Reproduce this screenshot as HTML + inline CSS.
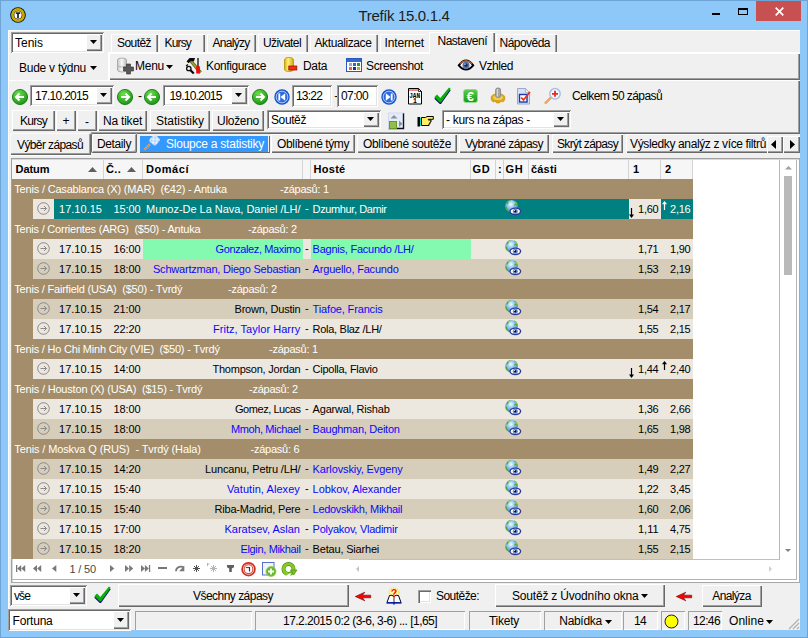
<!DOCTYPE html>
<html lang="cs"><head><meta charset="utf-8"><title>Trefík 15.0.1.4</title>
<style>
html,body{margin:0;padding:0;background:#8ec8f8;}
body{width:808px;height:638px;position:relative;overflow:hidden;font-family:"Liberation Sans", sans-serif;font-size:12px;}
body>div,body>span,body>svg{position:absolute;}
.t{white-space:pre;}
svg{overflow:visible;}
</style></head><body>
<svg width="0" height="0" style="left:0;top:0"><defs><radialGradient id="gl" cx="0.45" cy="0.35" r="0.7"><stop offset="0" stop-color="#f4fbff"/><stop offset="0.45" stop-color="#8cc4f0"/><stop offset="1" stop-color="#2a78d0"/></radialGradient><radialGradient id="gg" cx="0.4" cy="0.3" r="0.8"><stop offset="0" stop-color="#6be04a"/><stop offset="1" stop-color="#128a10"/></radialGradient></defs></svg>
<div id="win" style="left:0;top:0;width:808px;height:638px;background:#8ec8f8;box-shadow:inset 0 0 0 1px #6ea3d6;"></div>
<div style="left:8px;top:30px;width:792px;height:600px;background:#f0f0f0;box-shadow:inset 1px 1px 0 #fff;"></div>
<span class="t" style="left:358.50px;top:7px;font-size:15px;line-height:17px;color:#1c1c1c;letter-spacing:-0.344px;">Trefík 15.0.1.4</span>
<svg style="left:10px;top:7px" width="16" height="16" viewBox="0 0 16 16"><circle cx="8" cy="8" r="7.800" fill="#0a0a00"/><circle cx="8" cy="8" r="5.600" fill="none" stroke="#d0b000" stroke-width="2.600"/><circle cx="8" cy="8" r="5.600" fill="none" stroke="#a88c00" stroke-width="0.600" stroke-dasharray="1.200 1.200"/><circle cx="8" cy="8" r="3.700" fill="#fff"/><path d="M5.800 5.300h4.400v1.700h-1.300v4.300h-1.800v-4.300h-1.300z" fill="#282828"/></svg>
<div style="left:712px;top:13px;width:8px;height:2px;background:#000;"></div>
<div style="left:738px;top:8px;width:10px;height:7px;border:1px solid #000;border-top-width:2px;box-sizing:border-box;"></div>
<div style="left:756px;top:1px;width:45px;height:20px;background:#c75050;"></div>
<svg style="left:775px;top:7px" width="9" height="9" viewBox="0 0 9 9"><path d="M0.700 0.700l7.600 7.600M8.300 0.700l-7.600 7.600" stroke="#fff" stroke-width="1.700" fill="none"/></svg>
<div style="left:11px;top:32px;width:93px;height:21px;background:#fff;box-shadow:inset 1px 1px 0 #a0a0a0, inset -1px -1px 0 #fff, inset 2px 2px 0 #696969, inset -2px -2px 0 #e3e3e3;"></div>
<div style="left:86px;top:34px;width:16px;height:17px;background:#f0f0f0;box-shadow:inset 1px 1px 0 #fff, inset -1px -1px 0 #696969, inset -2px -2px 0 #a0a0a0;"></div>
<svg style="left:90px;top:40px" width="8" height="4" viewBox="0 0 8 4"><path d="M0 0h7l-3.5 4z" fill="#000"/></svg>
<span class="t" style="left:15.00px;top:36px;font-size:12px;line-height:14px;color:#000;">Tenis</span>
<div style="left:111px;top:34px;width:47px;height:18px;background:#f0f0f0;box-shadow:inset 1px 1px 0 #fff, inset -1px 0 0 #696969, inset -2px 0 0 #a0a0a0;"></div>
<span class="t" style="left:117.00px;top:36px;font-size:12px;line-height:14px;color:#000;letter-spacing:-0.560px;">Soutěž</span>
<div style="left:159px;top:34px;width:46px;height:18px;background:#f0f0f0;box-shadow:inset 1px 1px 0 #fff, inset -1px 0 0 #696969, inset -2px 0 0 #a0a0a0;"></div>
<span class="t" style="left:164.50px;top:36px;font-size:12px;line-height:14px;color:#000;letter-spacing:-0.835px;">Kursy</span>
<div style="left:207px;top:34px;width:49px;height:18px;background:#f0f0f0;box-shadow:inset 1px 1px 0 #fff, inset -1px 0 0 #696969, inset -2px 0 0 #a0a0a0;"></div>
<span class="t" style="left:212.50px;top:36px;font-size:12px;line-height:14px;color:#000;letter-spacing:-0.717px;">Analýzy</span>
<div style="left:258px;top:34px;width:50px;height:18px;background:#f0f0f0;box-shadow:inset 1px 1px 0 #fff, inset -1px 0 0 #696969, inset -2px 0 0 #a0a0a0;"></div>
<span class="t" style="left:263.00px;top:36px;font-size:12px;line-height:14px;color:#000;letter-spacing:-0.585px;">Uživatel</span>
<div style="left:310px;top:34px;width:68px;height:18px;background:#f0f0f0;box-shadow:inset 1px 1px 0 #fff, inset -1px 0 0 #696969, inset -2px 0 0 #a0a0a0;"></div>
<span class="t" style="left:314.50px;top:36px;font-size:12px;line-height:14px;color:#000;letter-spacing:-0.397px;">Aktualizace</span>
<div style="left:380px;top:34px;width:48px;height:18px;background:#f0f0f0;box-shadow:inset 1px 1px 0 #fff, inset -1px 0 0 #696969, inset -2px 0 0 #a0a0a0;"></div>
<span class="t" style="left:384.50px;top:36px;font-size:12px;line-height:14px;color:#000;letter-spacing:-0.149px;">Internet</span>
<div style="left:496px;top:34px;width:61px;height:18px;background:#f0f0f0;box-shadow:inset 1px 1px 0 #fff, inset -1px 0 0 #696969, inset -2px 0 0 #a0a0a0;"></div>
<span class="t" style="left:499.50px;top:36px;font-size:12px;line-height:14px;color:#000;letter-spacing:-0.526px;">Nápověda</span>
<div style="left:425px;top:34px;width:5px;height:18px;background:#f0f0f0;"></div>
<div style="left:429px;top:32px;width:66px;height:22px;background:#f0f0f0;box-shadow:inset 1px 1px 0 #fff, inset -1px 0 0 #696969, inset -2px 0 0 #a0a0a0;"></div>
<span class="t" style="left:437.50px;top:34px;font-size:12px;line-height:14px;color:#000;letter-spacing:-0.503px;">Nastavení</span>
<div style="left:108px;top:52px;width:692px;height:28px;background:#f0f0f0;box-shadow:inset 1px 1px 0 #fff, inset 2px 2px 0 #fff, inset -1px -1px 0 #696969, inset -2px -2px 0 #a0a0a0;"></div>
<div style="left:430px;top:52px;width:63px;height:2px;background:#f0f0f0;"></div>
<svg style="left:117px;top:57px" width="17" height="17" viewBox="0 0 17 17"><defs><linearGradient id="cy" x1="0" x2="1"><stop offset="0" stop-color="#c8c8c8"/><stop offset="0.5" stop-color="#f8f8f8"/><stop offset="1" stop-color="#b8b8b8"/></linearGradient></defs><path d="M0.500 3v10q0 2 4.500 2t4.500 -2v-10q0 -2 -4.500 -2t-4.500 2z" fill="url(#cy)" stroke="#a0a0a0" stroke-width="0.800"/><path d="M0.500 8q0 2 4.500 2t4.500 -2" fill="none" stroke="#a8a8a8" stroke-width="0.800"/><path d="M9.500 7h4v3h3v4h-3v3h-4v-3h-3v-4h3z" fill="#585858" stroke="#303030" stroke-width="0.600"/></svg>
<svg style="left:185px;top:57px" width="18" height="17" viewBox="0 0 18 17"><path d="M5.500 3.500l10 12" stroke="#4a5008" stroke-width="3.200"/><path d="M5.500 3.500l10 12" stroke="#98a030" stroke-width="2"/><path d="M1.500 4.500l3 -3.500h5.500l-1 3.200h-3.500l-1.800 2z" fill="#0a0a0a"/><path d="M13 1v9" stroke="#0a0a0a" stroke-width="1.300"/><rect x="11.200" y="9.300" width="3.700" height="7.200" fill="#f80808"/><circle cx="3.800" cy="11.500" r="2.200" fill="none" stroke="#0a0a0a" stroke-width="1.300"/><path d="M1 9l2 -1.500" stroke="#0a0a0a" stroke-width="1.300"/><path d="M5.300 13l3.500 3.500" stroke="#0a0a0a" stroke-width="2.200"/></svg>
<svg style="left:284px;top:57px" width="14" height="16" viewBox="0 0 14 16"><defs><linearGradient id="cyy" x1="0" x2="1"><stop offset="0" stop-color="#d8b000"/><stop offset="0.4" stop-color="#fff080"/><stop offset="1" stop-color="#d0a800"/></linearGradient></defs><path d="M0.500 3v9.500q0 2 4.500 2t4.500 -2v-9.500q0 -2.500 -4.500 -2.500t-4.500 2.500z" fill="url(#cyy)" stroke="#b89000" stroke-width="0.800"/><rect x="4.800" y="9" width="8" height="4" fill="#f03018" stroke="#a01000" stroke-width="0.800"/></svg>
<svg style="left:346px;top:58px" width="16" height="14" viewBox="0 0 16 14"><rect x="0.500" y="0.500" width="15" height="13" fill="#fff" stroke="#2858c0" stroke-width="1"/><rect x="1" y="1" width="14" height="3" fill="#3068d0"/><rect x="3" y="5" width="3" height="3" fill="#a8a0d8"/><rect x="7" y="5" width="3" height="3" fill="#2070d0"/><rect x="11" y="5" width="3" height="3" fill="#20a020"/><rect x="3" y="9" width="3" height="3" fill="#f06030"/><rect x="7" y="9" width="3" height="3" fill="#1030a0"/><rect x="11" y="9" width="3" height="3" fill="#d0a020"/></svg>
<svg style="left:458px;top:59px" width="16" height="12" viewBox="0 0 16 12"><path d="M0.800 6.300q7.200 -9.500 14.400 0q-7.200 8.500 -14.400 0z" fill="#fff" stroke="#000" stroke-width="2"/><path d="M2 4.800q6 -6 12 0" fill="none" stroke="#b06030" stroke-width="1.500"/><circle cx="8" cy="6.200" r="3.500" fill="#5070b0"/><circle cx="8" cy="6.200" r="1.600" fill="#182848"/><circle cx="7" cy="5.200" r="0.700" fill="#c0d8f8"/></svg>
<span class="t" style="left:19.00px;top:61px;font-size:12px;line-height:14px;color:#000;letter-spacing:-0.254px;">Bude v týdnu</span>
<svg style="left:90px;top:66px" width="7" height="4" viewBox="0 0 7 4"><path d="M0 0h7l-3.5 4z" fill="#000"/></svg>
<span class="t" style="left:135.00px;top:59px;font-size:12px;line-height:14px;color:#000;letter-spacing:-0.254px;">Menu</span>
<svg style="left:166px;top:65px" width="7" height="4" viewBox="0 0 7 4"><path d="M0 0h7l-3.5 4z" fill="#000"/></svg>
<span class="t" style="left:206.00px;top:59px;font-size:12px;line-height:14px;color:#000;letter-spacing:-0.368px;">Konfigurace</span>
<span class="t" style="left:303.00px;top:59px;font-size:12px;line-height:14px;color:#000;letter-spacing:-0.337px;">Data</span>
<span class="t" style="left:366.00px;top:59px;font-size:12px;line-height:14px;color:#000;letter-spacing:-0.370px;">Screenshot</span>
<span class="t" style="left:479.00px;top:59px;font-size:12px;line-height:14px;color:#000;letter-spacing:-0.449px;">Vzhled</span>
<div style="left:8px;top:80px;width:792px;height:54px;background:#f0f0f0;box-shadow:inset 1px 1px 0 #fff, inset -1px -1px 0 #696969, inset -2px -2px 0 #a0a0a0;"></div>
<svg style="left:12px;top:89px" width="16" height="16" viewBox="0 0 16 16"><circle cx="8" cy="8" r="7.6" fill="url(#gg)" stroke="#0c6e0c" stroke-width="0.8"/><path d="M12 8H4.5M7.5 4.5L4 8l3.5 3.5" stroke="#fff" stroke-width="2" fill="none"/></svg>
<div style="left:30px;top:85px;width:84px;height:21px;background:#fff;box-shadow:inset 1px 1px 0 #a0a0a0, inset -1px -1px 0 #fff, inset 2px 2px 0 #696969, inset -2px -2px 0 #e3e3e3;"></div>
<div style="left:96px;top:87px;width:16px;height:17px;background:#f0f0f0;box-shadow:inset 1px 1px 0 #fff, inset -1px -1px 0 #696969, inset -2px -2px 0 #a0a0a0;"></div>
<svg style="left:100px;top:93px" width="8" height="4" viewBox="0 0 8 4"><path d="M0 0h7l-3.5 4z" fill="#000"/></svg>
<span class="t" style="left:35.00px;top:89px;font-size:12px;line-height:14px;color:#000;letter-spacing:-0.706px;">17.10.2015</span>
<svg style="left:117px;top:89px" width="16" height="16" viewBox="0 0 16 16"><circle cx="8" cy="8" r="7.6" fill="url(#gg)" stroke="#0c6e0c" stroke-width="0.8"/><path d="M4 8h7.5M8.5 4.5L12 8l-3.5 3.5" stroke="#fff" stroke-width="2" fill="none"/></svg>
<span class="t" style="left:138.00px;top:89px;font-size:12px;line-height:14px;color:#000;">-</span>
<svg style="left:144px;top:89px" width="16" height="16" viewBox="0 0 16 16"><circle cx="8" cy="8" r="7.6" fill="url(#gg)" stroke="#0c6e0c" stroke-width="0.8"/><path d="M12 8H4.5M7.5 4.5L4 8l3.5 3.5" stroke="#fff" stroke-width="2" fill="none"/></svg>
<div style="left:163px;top:85px;width:86px;height:21px;background:#fff;box-shadow:inset 1px 1px 0 #a0a0a0, inset -1px -1px 0 #fff, inset 2px 2px 0 #696969, inset -2px -2px 0 #e3e3e3;"></div>
<div style="left:231px;top:87px;width:16px;height:17px;background:#f0f0f0;box-shadow:inset 1px 1px 0 #fff, inset -1px -1px 0 #696969, inset -2px -2px 0 #a0a0a0;"></div>
<svg style="left:235px;top:93px" width="8" height="4" viewBox="0 0 8 4"><path d="M0 0h7l-3.5 4z" fill="#000"/></svg>
<span class="t" style="left:169.50px;top:89px;font-size:12px;line-height:14px;color:#000;letter-spacing:-0.806px;">19.10.2015</span>
<svg style="left:252px;top:89px" width="16" height="16" viewBox="0 0 16 16"><circle cx="8" cy="8" r="7.6" fill="url(#gg)" stroke="#0c6e0c" stroke-width="0.8"/><path d="M4 8h7.5M8.5 4.5L12 8l-3.5 3.5" stroke="#fff" stroke-width="2" fill="none"/></svg>
<svg style="left:274px;top:89px" width="16" height="16" viewBox="0 0 16 16"><circle cx="8" cy="8" r="7.700" fill="#1450c8"/><circle cx="8" cy="8" r="5.900" fill="#2a6ce0" stroke="#dce8ff" stroke-width="0.800"/><path d="M5.300 4.500v7" stroke="#fff" stroke-width="1.800"/><path d="M11.200 4.300L6.500 8l4.700 3.700z" fill="#fff"/></svg>
<div style="left:292px;top:85px;width:40px;height:22px;background:#fff;box-shadow:inset 1px 1px 0 #a0a0a0, inset -1px -1px 0 #fff, inset 2px 2px 0 #696969, inset -2px -2px 0 #e3e3e3;"></div>
<span class="t" style="left:296.00px;top:89px;font-size:12px;line-height:14px;color:#000;letter-spacing:-0.806px;">13:22</span>
<span class="t" style="left:334.30px;top:89px;font-size:12px;line-height:14px;color:#000;">-</span>
<div style="left:337px;top:85px;width:41px;height:22px;background:#fff;box-shadow:inset 1px 1px 0 #a0a0a0, inset -1px -1px 0 #fff, inset 2px 2px 0 #696969, inset -2px -2px 0 #e3e3e3;"></div>
<span class="t" style="left:341.00px;top:89px;font-size:12px;line-height:14px;color:#000;letter-spacing:-0.606px;">07:00</span>
<svg style="left:381px;top:89px" width="16" height="16" viewBox="0 0 16 16"><circle cx="8" cy="8" r="7.700" fill="#1450c8"/><circle cx="8" cy="8" r="5.900" fill="#2a6ce0" stroke="#dce8ff" stroke-width="0.800"/><path d="M10.700 4.500v7" stroke="#fff" stroke-width="1.800"/><path d="M4.800 4.300L9.500 8l-4.700 3.700z" fill="#fff"/></svg>
<svg style="left:408px;top:88px" width="14" height="17" viewBox="0 0 14 17"><path d="M0.500 0.500h10l3 3v12.500h-13z" fill="#fff" stroke="#000" stroke-width="1"/><path d="M10.500 0.500v3h3" fill="none" stroke="#000" stroke-width="0.800"/><rect x="1" y="1.500" width="9" height="1" fill="#e02020"/><text x="1.200" y="9.500" font-size="6.500" font-family="Liberation Mono, monospace" font-weight="bold" fill="#000" textLength="11" lengthAdjust="spacingAndGlyphs">JAN</text><text x="5" y="15.300" font-size="6.500" font-family="Liberation Mono, monospace" font-weight="bold" fill="#000">1</text></svg>
<svg style="left:434px;top:88px" width="17" height="16" viewBox="0 0 17 16"><path d="M0.300 10.800l2.700 -2.700l3.300 3.300l8.700 -10.400l1.700 1.200l-9.700 13.800h-1.200z" fill="#101078"/><path d="M0.300 9.300l2.700 -2.700l3.300 3.300l8.700 -10.400l1.700 1.200l-9.700 13.800h-1.200z" fill="#08b008"/></svg>
<svg style="left:463px;top:89px" width="15" height="14" viewBox="0 0 15 14"><defs><linearGradient id="eg" x1="0" y1="0" x2="0" y2="1"><stop offset="0" stop-color="#58d048"/><stop offset="1" stop-color="#189818"/></linearGradient></defs><rect x="0.500" y="0.500" width="14" height="13" rx="2.500" fill="url(#eg)" stroke="#90e088"/><text x="7.300" y="11.800" font-size="13" font-family="Liberation Sans, sans-serif" font-weight="bold" text-anchor="middle" fill="#fff">€</text></svg>
<svg style="left:490px;top:87px" width="16" height="18" viewBox="0 0 16 18"><path d="M1 11q0 -4 7 -4.500q7 0.500 7 4.500q0 3 -2.500 4l-1.500 -0.800l-1.500 1.800h-3l-1.500 -1.800l-1.500 0.800q-2.500 -1 -2.500 -4z" fill="#d8a818" stroke="#c09010" stroke-width="0.600"/><ellipse cx="8" cy="10.500" rx="5" ry="2.600" fill="#f0cc50"/><rect x="5.600" y="1" width="5" height="9.500" rx="2" fill="#a8a8a8" stroke="#787878" stroke-width="0.700"/><rect x="6.800" y="2" width="1.200" height="7.500" fill="#d8d8d8"/></svg>
<svg style="left:517px;top:88px" width="14" height="17" viewBox="0 0 14 17"><path d="M0.500 0.500h8l4 4v11.500h-12z" fill="#d8e0f4" stroke="#98a8d0"/><path d="M8.500 0.500v4h4z" fill="#f4f6fc" stroke="#98a8d0" stroke-width="0.800"/><rect x="2.500" y="6.500" width="7.500" height="7.500" fill="#fff" stroke="#1838a8" stroke-width="1.400"/><path d="M4.200 9.500l2.300 2.500l6.500 -8" stroke="#f02818" stroke-width="1.700" fill="none"/></svg>
<svg style="left:543px;top:88px" width="18" height="17" viewBox="0 0 18 17"><path d="M2 15.500l6 -6" stroke="#e89048" stroke-width="2.400"/><path d="M2 15.500l6 -6" stroke="#f8c898" stroke-width="0.800"/><circle cx="12" cy="5.800" r="5.200" fill="#f0f6ff" stroke="#a8c0e0" stroke-width="1.500"/><path d="M12 2.800v6M9 5.800h6" stroke="#f02818" stroke-width="1.800"/></svg>
<span class="t" style="left:572.00px;top:89px;font-size:12px;line-height:14px;color:#000;letter-spacing:-0.587px;">Celkem 50 zápasů</span>
<div style="left:12px;top:110px;width:43px;height:21px;background:#f0f0f0;box-shadow:inset 1px 1px 0 #fff, inset -1px -1px 0 #696969, inset -2px -2px 0 #a0a0a0;"></div>
<span class="t" style="left:20.00px;top:114px;font-size:12px;line-height:14px;color:#000;letter-spacing:-0.735px;">Kursy</span>
<div style="left:56px;top:110px;width:20px;height:21px;background:#f0f0f0;box-shadow:inset 1px 1px 0 #fff, inset -1px -1px 0 #696969, inset -2px -2px 0 #a0a0a0;"></div>
<span class="t" style="left:62.50px;top:114px;font-size:12px;line-height:14px;color:#000;">+</span>
<div style="left:77px;top:110px;width:20px;height:21px;background:#f0f0f0;box-shadow:inset 1px 1px 0 #fff, inset -1px -1px 0 #696969, inset -2px -2px 0 #a0a0a0;"></div>
<span class="t" style="left:85.00px;top:115px;font-size:12px;line-height:14px;color:#000;">-</span>
<div style="left:98px;top:110px;width:49px;height:21px;background:#f0f0f0;box-shadow:inset 1px 1px 0 #fff, inset -1px -1px 0 #696969, inset -2px -2px 0 #a0a0a0;"></div>
<span class="t" style="left:103.00px;top:114px;font-size:12px;line-height:14px;color:#000;letter-spacing:-0.210px;">Na tiket</span>
<div style="left:150px;top:110px;width:60px;height:21px;background:#f0f0f0;box-shadow:inset 1px 1px 0 #fff, inset -1px -1px 0 #696969, inset -2px -2px 0 #a0a0a0;"></div>
<span class="t" style="left:156.00px;top:114px;font-size:12px;line-height:14px;color:#000;">Statistiky</span>
<div style="left:212px;top:110px;width:52px;height:21px;background:#f0f0f0;box-shadow:inset 1px 1px 0 #fff, inset -1px -1px 0 #696969, inset -2px -2px 0 #a0a0a0;"></div>
<span class="t" style="left:217.00px;top:114px;font-size:12px;line-height:14px;color:#000;letter-spacing:-0.290px;">Uloženo</span>
<div style="left:267px;top:110px;width:114px;height:19px;background:#fff;box-shadow:inset 1px 1px 0 #a0a0a0, inset -1px -1px 0 #fff, inset 2px 2px 0 #696969, inset -2px -2px 0 #e3e3e3;"></div>
<div style="left:363px;top:112px;width:16px;height:15px;background:#f0f0f0;box-shadow:inset 1px 1px 0 #fff, inset -1px -1px 0 #696969, inset -2px -2px 0 #a0a0a0;"></div>
<svg style="left:367px;top:117px" width="8" height="4" viewBox="0 0 8 4"><path d="M0 0h7l-3.5 4z" fill="#000"/></svg>
<span class="t" style="left:271.00px;top:113px;font-size:12px;line-height:14px;color:#000;letter-spacing:-0.393px;">Soutěž</span>
<svg style="left:388px;top:113px" width="17" height="17" viewBox="0 0 17 17"><rect x="0.500" y="0" width="15.500" height="16" fill="#e4ecfc"/><path d="M15.500 0v15.500h-15" fill="none" stroke="#101020" stroke-width="1.400"/><path d="M0.500 16v-16h15.500" fill="none" stroke="#c8d4f0" stroke-width="0.800"/><path d="M2.500 5.500h7l-3.500 -3.500z" fill="#8890a0"/><rect x="1.500" y="8.500" width="7" height="7" fill="#90c048" stroke="#6a9828" stroke-width="1"/><path d="M11 7.500v6.500l3.500 -3.250z" fill="#8890a0"/></svg>
<svg style="left:417px;top:116px" width="17" height="11" viewBox="0 0 17 11"><rect x="0.500" y="1" width="2.500" height="9.500" fill="#000"/><rect x="3" y="1.500" width="1.200" height="8.500" fill="#00e0e0"/><path d="M4.500 1.500h4l1.500 -1h6.300v2.800h-5v0.700h2.700v2h-1v1.800h-1v1.700h-7.500z" fill="#fff060" stroke="#000" stroke-width="1"/></svg>
<div style="left:442px;top:110px;width:129px;height:19px;background:#fff;box-shadow:inset 1px 1px 0 #a0a0a0, inset -1px -1px 0 #fff, inset 2px 2px 0 #696969, inset -2px -2px 0 #e3e3e3;"></div>
<div style="left:553px;top:112px;width:16px;height:15px;background:#f0f0f0;box-shadow:inset 1px 1px 0 #fff, inset -1px -1px 0 #696969, inset -2px -2px 0 #a0a0a0;"></div>
<svg style="left:557px;top:117px" width="8" height="4" viewBox="0 0 8 4"><path d="M0 0h7l-3.5 4z" fill="#000"/></svg>
<span class="t" style="left:446.00px;top:113px;font-size:12px;line-height:14px;color:#000;letter-spacing:-0.316px;">- kurs na zápas -</span>
<div style="left:8px;top:131px;width:83px;height:4px;background:#f0f0f0;"></div>
<div style="left:10px;top:133px;width:81px;height:22px;background:#f0f0f0;box-shadow:inset 1px 1px 0 #fafafa, inset -1px -1px 0 #696969, inset -2px -2px 0 #a0a0a0;border-radius:2px 2px 0 0;"></div>
<div style="left:8px;top:131px;width:1px;height:4px;background:#fff;"></div>
<div style="left:10px;top:155px;width:81px;height:1px;background:#fff;"></div>
<span class="t" style="left:17.00px;top:138px;font-size:12px;line-height:14px;color:#000;letter-spacing:-0.615px;">Výběr zápasů</span>
<div style="left:91px;top:133px;width:46px;height:20px;background:#f0f0f0;box-shadow:inset 0 0 0 1px #696969, inset 2px 2px 0 #fff, inset -2px -2px 0 #a0a0a0;border-radius:2px;"></div>
<span class="t" style="left:97.00px;top:137px;font-size:12px;line-height:14px;color:#000;letter-spacing:-0.383px;">Detaily</span>
<div style="left:140px;top:136px;width:130px;height:17px;background:#f0f0f0;box-shadow:inset -1px -1px 0 #696969;"></div>
<div style="left:140px;top:136px;width:128px;height:16px;background:#3399ff;"></div>
<span class="t" style="left:166.00px;top:137px;font-size:12px;line-height:14px;color:#fff;letter-spacing:-0.236px;">Sloupce a statistiky</span>
<svg style="left:143px;top:134px" width="18" height="17" viewBox="0 0 18 17"><defs><pattern id="chk" width="2" height="2" patternUnits="userSpaceOnUse"><rect width="2" height="2" fill="#9cc8ff"/><rect width="1" height="1" fill="#fff"/><rect x="1" y="1" width="1" height="1" fill="#fff"/></pattern></defs><path d="M1.500 15.500l6 -5.800" stroke="#e8a858" stroke-width="2.600" stroke-dasharray="1.300 0.700"/><rect x="7.300" y="1.600" width="8.600" height="9" rx="2.200" transform="rotate(42 11.600 6.100)" fill="url(#chk)"/></svg>
<div style="left:271px;top:134px;width:84px;height:19px;background:#f0f0f0;box-shadow:inset 1px 1px 0 #fff, inset -1px -1px 0 #696969, inset -2px -2px 0 #a0a0a0;"></div>
<span class="t" style="left:277.00px;top:137px;font-size:12px;line-height:14px;color:#000;letter-spacing:-0.413px;">Oblíbené týmy</span>
<div style="left:357px;top:134px;width:100px;height:19px;background:#f0f0f0;box-shadow:inset 1px 1px 0 #fff, inset -1px -1px 0 #696969, inset -2px -2px 0 #a0a0a0;"></div>
<span class="t" style="left:363.00px;top:137px;font-size:12px;line-height:14px;color:#000;letter-spacing:-0.379px;">Oblíbené soutěže</span>
<div style="left:459px;top:134px;width:90px;height:19px;background:#f0f0f0;box-shadow:inset 1px 1px 0 #fff, inset -1px -1px 0 #696969, inset -2px -2px 0 #a0a0a0;"></div>
<span class="t" style="left:465.00px;top:137px;font-size:12px;line-height:14px;color:#000;letter-spacing:-0.543px;">Vybrané zápasy</span>
<div style="left:552px;top:134px;width:71px;height:19px;background:#f0f0f0;box-shadow:inset 1px 1px 0 #fff, inset -1px -1px 0 #696969, inset -2px -2px 0 #a0a0a0;"></div>
<span class="t" style="left:557.00px;top:137px;font-size:12px;line-height:14px;color:#000;letter-spacing:-0.641px;">Skrýt zápasy</span>
<div style="left:626px;top:134px;width:141px;height:19px;background:#f0f0f0;box-shadow:inset 1px 1px 0 #fff, inset 0 -1px 0 #696969, inset 0 -2px 0 #a0a0a0;"></div>
<span class="t" style="left:630.00px;top:137px;font-size:12px;line-height:14px;color:#000;letter-spacing:-0.370px;">Výsledky analýz z více filtrů</span>
<div style="left:767px;top:136px;width:16px;height:17px;background:#f0f0f0;box-shadow:inset 1px 1px 0 #fff, inset -1px -1px 0 #696969, inset -2px -2px 0 #a0a0a0;"></div>
<div style="left:783px;top:136px;width:17px;height:17px;background:#f0f0f0;box-shadow:inset 1px 1px 0 #fff, inset -1px -1px 0 #696969, inset -2px -2px 0 #a0a0a0;"></div>
<svg style="left:771px;top:140px" width="5" height="9" viewBox="0 0 5 9"><path d="M5 0v9l-5 -4.500z" fill="#000"/></svg>
<svg style="left:790px;top:140px" width="5" height="9" viewBox="0 0 5 9"><path d="M0 0v9l5 -4.500z" fill="#000"/></svg>
<div style="left:11px;top:158px;width:789px;height:425px;background:#fff;box-shadow:inset 1px 1px 0 #a0a0a0, inset -1px -1px 0 #a8a8a8, inset 2px 2px 0 #d8d8d8;"></div>
<div style="left:796px;top:160px;width:1px;height:420px;background:#b4b4b4;"></div>
<div style="left:12px;top:579px;width:785px;height:1px;background:#b4b4b4;"></div>
<div style="left:12px;top:160px;width:681px;height:19px;background:#f6f6f6;"></div>
<div style="left:103px;top:160px;width:1px;height:19px;background:#d4d4d4;"></div>
<span class="t" style="left:15.50px;top:163px;font-size:11px;line-height:13px;color:#000;font-weight:bold;letter-spacing:-0.045px;">Datum</span>
<div style="left:142px;top:160px;width:1px;height:19px;background:#d4d4d4;"></div>
<span class="t" style="left:106.00px;top:163px;font-size:11px;line-height:13px;color:#000;font-weight:bold;letter-spacing:0.315px;">Č..</span>
<div style="left:302px;top:160px;width:1px;height:19px;background:#d4d4d4;"></div>
<span class="t" style="left:146.00px;top:163px;font-size:11px;line-height:13px;color:#000;font-weight:bold;letter-spacing:0.544px;">Domácí</span>
<div style="left:310px;top:160px;width:1px;height:19px;background:#d4d4d4;"></div>
<div style="left:470px;top:160px;width:1px;height:19px;background:#d4d4d4;"></div>
<span class="t" style="left:313.50px;top:163px;font-size:11px;line-height:13px;color:#000;font-weight:bold;letter-spacing:0.288px;">Hosté</span>
<div style="left:495px;top:160px;width:1px;height:19px;background:#d4d4d4;"></div>
<span class="t" style="left:472.50px;top:163px;font-size:11px;line-height:13px;color:#000;font-weight:bold;letter-spacing:0.750px;">GD</span>
<div style="left:503px;top:160px;width:1px;height:19px;background:#d4d4d4;"></div>
<span class="t" style="left:498.00px;top:163px;font-size:11px;line-height:13px;color:#000;font-weight:bold;">:</span>
<div style="left:528px;top:160px;width:1px;height:19px;background:#d4d4d4;"></div>
<span class="t" style="left:505.50px;top:163px;font-size:11px;line-height:13px;color:#000;font-weight:bold;letter-spacing:0.750px;">GH</span>
<div style="left:628px;top:160px;width:1px;height:19px;background:#d4d4d4;"></div>
<span class="t" style="left:531.00px;top:163px;font-size:11px;line-height:13px;color:#000;font-weight:bold;letter-spacing:0.186px;">části</span>
<div style="left:660px;top:160px;width:1px;height:19px;background:#d4d4d4;"></div>
<span class="t" style="left:633.00px;top:163px;font-size:11px;line-height:13px;color:#000;font-weight:bold;">1</span>
<div style="left:692px;top:160px;width:1px;height:19px;background:#d4d4d4;"></div>
<span class="t" style="left:665.00px;top:163px;font-size:11px;line-height:13px;color:#000;font-weight:bold;">2</span>
<svg style="left:88px;top:167px" width="9" height="5" viewBox="0 0 9 5"><path d="M0 5h9l-4.500 -5z" fill="#606060"/></svg>
<svg style="left:127px;top:167px" width="9" height="5" viewBox="0 0 9 5"><path d="M0 5h9l-4.500 -5z" fill="#606060"/></svg>
<div style="left:12px;top:179px;width:681px;height:20px;background:#a38d6a;"></div>
<span class="t" style="left:14.30px;top:183px;font-size:11px;line-height:13px;color:#fff;letter-spacing:-0.184px;">Tenis / Casablanca (X) (MAR)  (€42) - Antuka</span>
<span class="t" style="left:280.00px;top:183px;font-size:11px;line-height:13px;color:#fff;letter-spacing:-0.236px;">-zápasů: 1</span>
<div style="left:12px;top:199px;width:21px;height:20px;background:#a38d6a;"></div>
<div style="left:33px;top:199px;width:21px;height:20px;background:#ece7df;"></div>
<div style="left:54px;top:199px;width:639px;height:20px;background:#008080;"></div>
<div style="left:629px;top:199px;width:32px;height:20px;background:#ece7df;"></div>
<svg style="left:37px;top:202px" width="13" height="13" viewBox="0 0 13 13"><circle cx="6.500" cy="6.500" r="5.800" fill="none" stroke="#8a8a8a" stroke-width="1"/><path d="M3.500 6.500h6M7 4l2.500 2.500l-2.500 2.500" stroke="#8a8a8a" stroke-width="1" fill="none"/></svg>
<span class="t" style="left:59.00px;top:203px;font-size:11px;line-height:13px;color:#fff;letter-spacing:0.023px;">17.10.15</span>
<span class="t" style="left:113.50px;top:203px;font-size:11px;line-height:13px;color:#fff;letter-spacing:-0.105px;">15:00</span>
<span class="t" style="left:146.00px;top:203px;font-size:11px;line-height:13px;color:#fff;letter-spacing:-0.027px;">Munoz-De La Nava, Daniel /LH/</span>
<span class="t" style="left:305.00px;top:202px;font-size:11px;line-height:13px;color:#fff;">-</span>
<span class="t" style="left:312.60px;top:203px;font-size:11px;line-height:13px;color:#fff;letter-spacing:-0.390px;">Dzumhur, Damir</span>
<svg style="left:505px;top:200px" width="17" height="16" viewBox="0 0 17 16"><circle cx="6.500" cy="6.200" r="6.200" fill="url(#gl)"/><path d="M2.300 1.700q1.800 -1.500 3.500 -1.500q-0.500 1.200 -1.800 1.600q-0.700 1 -1.200 2.600q-0.600 -0.200 -1.500 0.400q0.200 -1.800 1 -3.100zM0.400 6.500q0.600 -0.500 1.300 0.300q0.200 2 1.400 3.400q0.600 1.200 1.800 2q-2.800 -0.500 -4 -3q-0.500 -1.300 -0.500 -2.700zM9 0.600q2.500 1 3.400 3.200q0.300 1.500 0 3q-0.800 -0.600 -1 -1.800q-1.200 0 -2.400 1q0.200 -1.500 1.300 -2.400q-0.300 -1.600 -1.300 -3z" fill="#58a828"/><path d="M3 2.200q0.800 -0.800 1.800 -1M10 2q1.200 1 1.700 2.300" stroke="#b0dc60" stroke-width="0.800" fill="none"/><ellipse cx="10.300" cy="11.300" rx="5.300" ry="3.200" fill="#fff" stroke="#2a3c98" stroke-width="1.400"/><circle cx="10.300" cy="11.300" r="2.500" fill="#6a88c0"/><circle cx="10.300" cy="11.300" r="1.100" fill="#000"/><circle cx="9.500" cy="10.500" r="0.600" fill="#c8e8ff"/></svg>
<span class="t" style="left:638.00px;top:203px;font-size:11px;line-height:13px;color:#000;letter-spacing:-0.227px;">1,60</span>
<span class="t" style="left:670.00px;top:203px;font-size:11px;line-height:13px;color:#fff;letter-spacing:-0.227px;">2,16</span>
<svg style="left:629px;top:208px" width="5" height="10" viewBox="0 0 5 10"><path d="M2.500 0v9" stroke="#000" stroke-width="1.200" fill="none"/><path d="M0 6.500l2.500 3.500l2.500 -3.500z" fill="#000"/></svg>
<svg style="left:662px;top:201px" width="5" height="9" viewBox="0 0 5 9"><path d="M2.500 1v8" stroke="#fff" stroke-width="1.200" fill="none"/><path d="M0 3.200l2.500 -3.200l2.500 3.200z" fill="#fff"/></svg>
<div style="left:12px;top:219px;width:681px;height:20px;background:#a38d6a;"></div>
<span class="t" style="left:14.30px;top:223px;font-size:11px;line-height:13px;color:#fff;letter-spacing:-0.223px;">Tenis / Corrientes (ARG)  ($50) - Antuka</span>
<span class="t" style="left:248.00px;top:223px;font-size:11px;line-height:13px;color:#fff;letter-spacing:-0.236px;">-zápasů: 2</span>
<div style="left:12px;top:239px;width:21px;height:20px;background:#a38d6a;"></div>
<div style="left:33px;top:239px;width:660px;height:20px;background:#ece7df;"></div>
<div style="left:143px;top:239px;width:160px;height:20px;background:#84f9b0;"></div>
<div style="left:311px;top:239px;width:160px;height:20px;background:#84f9b0;"></div>
<svg style="left:37px;top:242px" width="13" height="13" viewBox="0 0 13 13"><circle cx="6.500" cy="6.500" r="5.800" fill="none" stroke="#8a8a8a" stroke-width="1"/><path d="M3.500 6.500h6M7 4l2.500 2.500l-2.500 2.500" stroke="#8a8a8a" stroke-width="1" fill="none"/></svg>
<span class="t" style="left:59.00px;top:243px;font-size:11px;line-height:13px;color:#000;letter-spacing:0.023px;">17.10.15</span>
<span class="t" style="left:113.50px;top:243px;font-size:11px;line-height:13px;color:#000;letter-spacing:-0.105px;">16:00</span>
<span class="t" style="left:215.50px;top:243px;font-size:11px;line-height:13px;color:#0808fa;letter-spacing:-0.381px;">Gonzalez, Maximo</span>
<span class="t" style="left:305.00px;top:242px;font-size:11px;line-height:13px;color:#000;">-</span>
<span class="t" style="left:312.60px;top:243px;font-size:11px;line-height:13px;color:#0808fa;letter-spacing:-0.239px;">Bagnis, Facundo /LH/</span>
<svg style="left:505px;top:240px" width="17" height="16" viewBox="0 0 17 16"><circle cx="6.500" cy="6.200" r="6.200" fill="url(#gl)"/><path d="M2.300 1.700q1.800 -1.500 3.500 -1.500q-0.500 1.200 -1.800 1.600q-0.700 1 -1.200 2.600q-0.600 -0.200 -1.500 0.400q0.200 -1.800 1 -3.100zM0.400 6.500q0.600 -0.500 1.300 0.300q0.200 2 1.400 3.400q0.600 1.200 1.800 2q-2.800 -0.500 -4 -3q-0.500 -1.300 -0.500 -2.700zM9 0.600q2.500 1 3.400 3.200q0.300 1.500 0 3q-0.800 -0.600 -1 -1.800q-1.200 0 -2.400 1q0.200 -1.500 1.300 -2.400q-0.300 -1.600 -1.300 -3z" fill="#58a828"/><path d="M3 2.200q0.800 -0.800 1.800 -1M10 2q1.200 1 1.700 2.300" stroke="#b0dc60" stroke-width="0.800" fill="none"/><ellipse cx="10.300" cy="11.300" rx="5.300" ry="3.200" fill="#fff" stroke="#2a3c98" stroke-width="1.400"/><circle cx="10.300" cy="11.300" r="2.500" fill="#6a88c0"/><circle cx="10.300" cy="11.300" r="1.100" fill="#000"/><circle cx="9.500" cy="10.500" r="0.600" fill="#c8e8ff"/></svg>
<span class="t" style="left:638.00px;top:243px;font-size:11px;line-height:13px;color:#000;letter-spacing:-0.227px;">1,71</span>
<span class="t" style="left:670.00px;top:243px;font-size:11px;line-height:13px;color:#000;letter-spacing:-0.227px;">1,90</span>
<div style="left:12px;top:259px;width:21px;height:20px;background:#a38d6a;"></div>
<div style="left:33px;top:259px;width:660px;height:20px;background:#d7cdbb;"></div>
<svg style="left:37px;top:262px" width="13" height="13" viewBox="0 0 13 13"><circle cx="6.500" cy="6.500" r="5.800" fill="none" stroke="#8a8a8a" stroke-width="1"/><path d="M3.500 6.500h6M7 4l2.500 2.500l-2.500 2.500" stroke="#8a8a8a" stroke-width="1" fill="none"/></svg>
<span class="t" style="left:59.00px;top:263px;font-size:11px;line-height:13px;color:#000;letter-spacing:0.023px;">17.10.15</span>
<span class="t" style="left:113.50px;top:263px;font-size:11px;line-height:13px;color:#000;letter-spacing:-0.105px;">18:00</span>
<span class="t" style="left:153.00px;top:263px;font-size:11px;line-height:13px;color:#0808fa;letter-spacing:-0.213px;">Schwartzman, Diego Sebastian</span>
<span class="t" style="left:305.00px;top:262px;font-size:11px;line-height:13px;color:#000;">-</span>
<span class="t" style="left:312.60px;top:263px;font-size:11px;line-height:13px;color:#0808fa;letter-spacing:-0.193px;">Arguello, Facundo</span>
<svg style="left:505px;top:260px" width="17" height="16" viewBox="0 0 17 16"><circle cx="6.500" cy="6.200" r="6.200" fill="url(#gl)"/><path d="M2.300 1.700q1.800 -1.500 3.500 -1.500q-0.500 1.200 -1.800 1.600q-0.700 1 -1.200 2.600q-0.600 -0.200 -1.500 0.400q0.200 -1.800 1 -3.100zM0.400 6.500q0.600 -0.500 1.300 0.300q0.200 2 1.400 3.400q0.600 1.200 1.800 2q-2.800 -0.500 -4 -3q-0.500 -1.300 -0.500 -2.700zM9 0.600q2.500 1 3.400 3.200q0.300 1.500 0 3q-0.800 -0.600 -1 -1.800q-1.200 0 -2.400 1q0.200 -1.500 1.300 -2.400q-0.300 -1.600 -1.300 -3z" fill="#58a828"/><path d="M3 2.200q0.800 -0.800 1.800 -1M10 2q1.200 1 1.700 2.300" stroke="#b0dc60" stroke-width="0.800" fill="none"/><ellipse cx="10.300" cy="11.300" rx="5.300" ry="3.200" fill="#fff" stroke="#2a3c98" stroke-width="1.400"/><circle cx="10.300" cy="11.300" r="2.500" fill="#6a88c0"/><circle cx="10.300" cy="11.300" r="1.100" fill="#000"/><circle cx="9.500" cy="10.500" r="0.600" fill="#c8e8ff"/></svg>
<span class="t" style="left:638.00px;top:263px;font-size:11px;line-height:13px;color:#000;letter-spacing:-0.227px;">1,53</span>
<span class="t" style="left:670.00px;top:263px;font-size:11px;line-height:13px;color:#000;letter-spacing:-0.227px;">2,19</span>
<div style="left:12px;top:279px;width:681px;height:20px;background:#a38d6a;"></div>
<span class="t" style="left:14.30px;top:283px;font-size:11px;line-height:13px;color:#fff;letter-spacing:-0.206px;">Tenis / Fairfield (USA)  ($50) - Tvrdý</span>
<span class="t" style="left:228.00px;top:283px;font-size:11px;line-height:13px;color:#fff;letter-spacing:-0.236px;">-zápasů: 2</span>
<div style="left:12px;top:299px;width:21px;height:20px;background:#a38d6a;"></div>
<div style="left:33px;top:299px;width:660px;height:20px;background:#d7cdbb;"></div>
<svg style="left:37px;top:302px" width="13" height="13" viewBox="0 0 13 13"><circle cx="6.500" cy="6.500" r="5.800" fill="none" stroke="#8a8a8a" stroke-width="1"/><path d="M3.500 6.500h6M7 4l2.500 2.500l-2.500 2.500" stroke="#8a8a8a" stroke-width="1" fill="none"/></svg>
<span class="t" style="left:59.00px;top:303px;font-size:11px;line-height:13px;color:#000;letter-spacing:0.023px;">17.10.15</span>
<span class="t" style="left:113.50px;top:303px;font-size:11px;line-height:13px;color:#000;letter-spacing:-0.105px;">21:00</span>
<span class="t" style="left:234.50px;top:303px;font-size:11px;line-height:13px;color:#000;letter-spacing:-0.190px;">Brown, Dustin</span>
<span class="t" style="left:305.00px;top:302px;font-size:11px;line-height:13px;color:#000;">-</span>
<span class="t" style="left:312.60px;top:303px;font-size:11px;line-height:13px;color:#0808fa;letter-spacing:-0.156px;">Tiafoe, Francis</span>
<svg style="left:505px;top:300px" width="17" height="16" viewBox="0 0 17 16"><circle cx="6.500" cy="6.200" r="6.200" fill="url(#gl)"/><path d="M2.300 1.700q1.800 -1.500 3.500 -1.500q-0.500 1.200 -1.800 1.600q-0.700 1 -1.200 2.600q-0.600 -0.200 -1.500 0.400q0.200 -1.800 1 -3.100zM0.400 6.500q0.600 -0.500 1.300 0.300q0.200 2 1.400 3.400q0.600 1.200 1.800 2q-2.800 -0.500 -4 -3q-0.500 -1.300 -0.500 -2.700zM9 0.600q2.500 1 3.400 3.200q0.300 1.500 0 3q-0.800 -0.600 -1 -1.800q-1.200 0 -2.400 1q0.200 -1.500 1.300 -2.400q-0.300 -1.600 -1.300 -3z" fill="#58a828"/><path d="M3 2.200q0.800 -0.800 1.800 -1M10 2q1.200 1 1.700 2.300" stroke="#b0dc60" stroke-width="0.800" fill="none"/><ellipse cx="10.300" cy="11.300" rx="5.300" ry="3.200" fill="#fff" stroke="#2a3c98" stroke-width="1.400"/><circle cx="10.300" cy="11.300" r="2.500" fill="#6a88c0"/><circle cx="10.300" cy="11.300" r="1.100" fill="#000"/><circle cx="9.500" cy="10.500" r="0.600" fill="#c8e8ff"/></svg>
<span class="t" style="left:638.00px;top:303px;font-size:11px;line-height:13px;color:#000;letter-spacing:-0.227px;">1,54</span>
<span class="t" style="left:670.00px;top:303px;font-size:11px;line-height:13px;color:#000;letter-spacing:-0.227px;">2,17</span>
<div style="left:12px;top:319px;width:21px;height:20px;background:#a38d6a;"></div>
<div style="left:33px;top:319px;width:660px;height:20px;background:#ece7df;"></div>
<svg style="left:37px;top:322px" width="13" height="13" viewBox="0 0 13 13"><circle cx="6.500" cy="6.500" r="5.800" fill="none" stroke="#8a8a8a" stroke-width="1"/><path d="M3.500 6.500h6M7 4l2.500 2.500l-2.500 2.500" stroke="#8a8a8a" stroke-width="1" fill="none"/></svg>
<span class="t" style="left:59.00px;top:323px;font-size:11px;line-height:13px;color:#000;letter-spacing:0.023px;">17.10.15</span>
<span class="t" style="left:113.50px;top:323px;font-size:11px;line-height:13px;color:#000;letter-spacing:-0.105px;">22:20</span>
<span class="t" style="left:213.00px;top:323px;font-size:11px;line-height:13px;color:#0808fa;letter-spacing:0.038px;">Fritz, Taylor Harry</span>
<span class="t" style="left:305.00px;top:322px;font-size:11px;line-height:13px;color:#000;">-</span>
<span class="t" style="left:312.60px;top:323px;font-size:11px;line-height:13px;color:#000;letter-spacing:-0.291px;">Rola, Blaz /LH/</span>
<svg style="left:505px;top:320px" width="17" height="16" viewBox="0 0 17 16"><circle cx="6.500" cy="6.200" r="6.200" fill="url(#gl)"/><path d="M2.300 1.700q1.800 -1.500 3.500 -1.500q-0.500 1.200 -1.800 1.600q-0.700 1 -1.200 2.600q-0.600 -0.200 -1.500 0.400q0.200 -1.800 1 -3.100zM0.400 6.500q0.600 -0.500 1.300 0.300q0.200 2 1.400 3.400q0.600 1.200 1.800 2q-2.800 -0.500 -4 -3q-0.500 -1.300 -0.500 -2.700zM9 0.600q2.500 1 3.400 3.200q0.300 1.500 0 3q-0.800 -0.600 -1 -1.800q-1.200 0 -2.400 1q0.200 -1.500 1.300 -2.400q-0.300 -1.600 -1.300 -3z" fill="#58a828"/><path d="M3 2.200q0.800 -0.800 1.800 -1M10 2q1.200 1 1.700 2.300" stroke="#b0dc60" stroke-width="0.800" fill="none"/><ellipse cx="10.300" cy="11.300" rx="5.300" ry="3.200" fill="#fff" stroke="#2a3c98" stroke-width="1.400"/><circle cx="10.300" cy="11.300" r="2.500" fill="#6a88c0"/><circle cx="10.300" cy="11.300" r="1.100" fill="#000"/><circle cx="9.500" cy="10.500" r="0.600" fill="#c8e8ff"/></svg>
<span class="t" style="left:638.00px;top:323px;font-size:11px;line-height:13px;color:#000;letter-spacing:-0.227px;">1,55</span>
<span class="t" style="left:670.00px;top:323px;font-size:11px;line-height:13px;color:#000;letter-spacing:-0.227px;">2,15</span>
<div style="left:12px;top:339px;width:681px;height:20px;background:#a38d6a;"></div>
<span class="t" style="left:14.30px;top:343px;font-size:11px;line-height:13px;color:#fff;letter-spacing:-0.197px;">Tenis / Ho Chi Minh City (VIE)  ($50) - Tvrdý</span>
<span class="t" style="left:269.00px;top:343px;font-size:11px;line-height:13px;color:#fff;letter-spacing:-0.236px;">-zápasů: 1</span>
<div style="left:12px;top:359px;width:21px;height:20px;background:#a38d6a;"></div>
<div style="left:33px;top:359px;width:660px;height:20px;background:#ece7df;"></div>
<svg style="left:37px;top:362px" width="13" height="13" viewBox="0 0 13 13"><circle cx="6.500" cy="6.500" r="5.800" fill="none" stroke="#8a8a8a" stroke-width="1"/><path d="M3.500 6.500h6M7 4l2.500 2.500l-2.500 2.500" stroke="#8a8a8a" stroke-width="1" fill="none"/></svg>
<span class="t" style="left:59.00px;top:363px;font-size:11px;line-height:13px;color:#000;letter-spacing:0.023px;">17.10.15</span>
<span class="t" style="left:113.50px;top:363px;font-size:11px;line-height:13px;color:#000;letter-spacing:-0.105px;">14:00</span>
<span class="t" style="left:212.50px;top:363px;font-size:11px;line-height:13px;color:#000;letter-spacing:-0.232px;">Thompson, Jordan</span>
<span class="t" style="left:305.00px;top:362px;font-size:11px;line-height:13px;color:#000;">-</span>
<span class="t" style="left:312.60px;top:363px;font-size:11px;line-height:13px;color:#000;letter-spacing:-0.272px;">Cipolla, Flavio</span>
<svg style="left:505px;top:360px" width="17" height="16" viewBox="0 0 17 16"><circle cx="6.500" cy="6.200" r="6.200" fill="url(#gl)"/><path d="M2.300 1.700q1.800 -1.500 3.500 -1.500q-0.500 1.200 -1.800 1.600q-0.700 1 -1.200 2.600q-0.600 -0.200 -1.500 0.400q0.200 -1.800 1 -3.100zM0.400 6.500q0.600 -0.500 1.300 0.300q0.200 2 1.400 3.400q0.600 1.200 1.800 2q-2.800 -0.500 -4 -3q-0.500 -1.300 -0.500 -2.700zM9 0.600q2.500 1 3.400 3.200q0.300 1.500 0 3q-0.800 -0.600 -1 -1.800q-1.200 0 -2.400 1q0.200 -1.500 1.300 -2.400q-0.300 -1.600 -1.300 -3z" fill="#58a828"/><path d="M3 2.200q0.800 -0.800 1.800 -1M10 2q1.200 1 1.700 2.300" stroke="#b0dc60" stroke-width="0.800" fill="none"/><ellipse cx="10.300" cy="11.300" rx="5.300" ry="3.200" fill="#fff" stroke="#2a3c98" stroke-width="1.400"/><circle cx="10.300" cy="11.300" r="2.500" fill="#6a88c0"/><circle cx="10.300" cy="11.300" r="1.100" fill="#000"/><circle cx="9.500" cy="10.500" r="0.600" fill="#c8e8ff"/></svg>
<span class="t" style="left:638.00px;top:363px;font-size:11px;line-height:13px;color:#000;letter-spacing:-0.227px;">1,44</span>
<span class="t" style="left:670.00px;top:363px;font-size:11px;line-height:13px;color:#000;letter-spacing:-0.227px;">2,40</span>
<svg style="left:629px;top:368px" width="5" height="10" viewBox="0 0 5 10"><path d="M2.500 0v9" stroke="#000" stroke-width="1.200" fill="none"/><path d="M0 6.500l2.500 3.500l2.500 -3.500z" fill="#000"/></svg>
<svg style="left:661.5px;top:361px" width="5" height="9" viewBox="0 0 5 9"><path d="M2.500 1v8" stroke="#000" stroke-width="1.200" fill="none"/><path d="M0 3.200l2.500 -3.200l2.500 3.200z" fill="#000"/></svg>
<div style="left:12px;top:379px;width:681px;height:20px;background:#a38d6a;"></div>
<span class="t" style="left:14.30px;top:383px;font-size:11px;line-height:13px;color:#fff;letter-spacing:-0.185px;">Tenis / Houston (X) (USA)  ($15) - Tvrdý</span>
<span class="t" style="left:249.00px;top:383px;font-size:11px;line-height:13px;color:#fff;letter-spacing:-0.236px;">-zápasů: 2</span>
<div style="left:12px;top:399px;width:21px;height:20px;background:#a38d6a;"></div>
<div style="left:33px;top:399px;width:660px;height:20px;background:#ece7df;"></div>
<svg style="left:37px;top:402px" width="13" height="13" viewBox="0 0 13 13"><circle cx="6.500" cy="6.500" r="5.800" fill="none" stroke="#8a8a8a" stroke-width="1"/><path d="M3.500 6.500h6M7 4l2.500 2.500l-2.500 2.500" stroke="#8a8a8a" stroke-width="1" fill="none"/></svg>
<span class="t" style="left:59.00px;top:403px;font-size:11px;line-height:13px;color:#000;letter-spacing:0.023px;">17.10.15</span>
<span class="t" style="left:113.50px;top:403px;font-size:11px;line-height:13px;color:#000;letter-spacing:-0.105px;">18:00</span>
<span class="t" style="left:235.00px;top:403px;font-size:11px;line-height:13px;color:#000;letter-spacing:-0.452px;">Gomez, Lucas</span>
<span class="t" style="left:305.00px;top:402px;font-size:11px;line-height:13px;color:#000;">-</span>
<span class="t" style="left:312.60px;top:403px;font-size:11px;line-height:13px;color:#000;letter-spacing:-0.206px;">Agarwal, Rishab</span>
<svg style="left:505px;top:400px" width="17" height="16" viewBox="0 0 17 16"><circle cx="6.500" cy="6.200" r="6.200" fill="url(#gl)"/><path d="M2.300 1.700q1.800 -1.500 3.500 -1.500q-0.500 1.200 -1.800 1.600q-0.700 1 -1.200 2.600q-0.600 -0.200 -1.500 0.400q0.200 -1.800 1 -3.100zM0.400 6.500q0.600 -0.500 1.300 0.300q0.200 2 1.400 3.400q0.600 1.200 1.800 2q-2.800 -0.500 -4 -3q-0.500 -1.300 -0.500 -2.700zM9 0.600q2.500 1 3.400 3.200q0.300 1.500 0 3q-0.800 -0.600 -1 -1.800q-1.200 0 -2.400 1q0.200 -1.500 1.300 -2.400q-0.300 -1.600 -1.300 -3z" fill="#58a828"/><path d="M3 2.200q0.800 -0.800 1.800 -1M10 2q1.200 1 1.700 2.300" stroke="#b0dc60" stroke-width="0.800" fill="none"/><ellipse cx="10.300" cy="11.300" rx="5.300" ry="3.200" fill="#fff" stroke="#2a3c98" stroke-width="1.400"/><circle cx="10.300" cy="11.300" r="2.500" fill="#6a88c0"/><circle cx="10.300" cy="11.300" r="1.100" fill="#000"/><circle cx="9.500" cy="10.500" r="0.600" fill="#c8e8ff"/></svg>
<span class="t" style="left:638.00px;top:403px;font-size:11px;line-height:13px;color:#000;letter-spacing:-0.227px;">1,36</span>
<span class="t" style="left:670.00px;top:403px;font-size:11px;line-height:13px;color:#000;letter-spacing:-0.227px;">2,66</span>
<div style="left:12px;top:419px;width:21px;height:20px;background:#a38d6a;"></div>
<div style="left:33px;top:419px;width:660px;height:20px;background:#d7cdbb;"></div>
<svg style="left:37px;top:422px" width="13" height="13" viewBox="0 0 13 13"><circle cx="6.500" cy="6.500" r="5.800" fill="none" stroke="#8a8a8a" stroke-width="1"/><path d="M3.500 6.500h6M7 4l2.500 2.500l-2.500 2.500" stroke="#8a8a8a" stroke-width="1" fill="none"/></svg>
<span class="t" style="left:59.00px;top:423px;font-size:11px;line-height:13px;color:#000;letter-spacing:0.023px;">17.10.15</span>
<span class="t" style="left:113.50px;top:423px;font-size:11px;line-height:13px;color:#000;letter-spacing:-0.105px;">18:00</span>
<span class="t" style="left:231.00px;top:423px;font-size:11px;line-height:13px;color:#0808fa;letter-spacing:-0.391px;">Mmoh, Michael</span>
<span class="t" style="left:305.00px;top:422px;font-size:11px;line-height:13px;color:#000;">-</span>
<span class="t" style="left:312.60px;top:423px;font-size:11px;line-height:13px;color:#0808fa;letter-spacing:-0.257px;">Baughman, Deiton</span>
<svg style="left:505px;top:420px" width="17" height="16" viewBox="0 0 17 16"><circle cx="6.500" cy="6.200" r="6.200" fill="url(#gl)"/><path d="M2.300 1.700q1.800 -1.500 3.500 -1.500q-0.500 1.200 -1.800 1.600q-0.700 1 -1.200 2.600q-0.600 -0.200 -1.500 0.400q0.200 -1.800 1 -3.100zM0.400 6.500q0.600 -0.500 1.300 0.300q0.200 2 1.400 3.400q0.600 1.200 1.800 2q-2.800 -0.500 -4 -3q-0.500 -1.300 -0.500 -2.700zM9 0.600q2.500 1 3.400 3.200q0.300 1.500 0 3q-0.800 -0.600 -1 -1.800q-1.200 0 -2.400 1q0.200 -1.500 1.300 -2.400q-0.300 -1.600 -1.300 -3z" fill="#58a828"/><path d="M3 2.200q0.800 -0.800 1.800 -1M10 2q1.200 1 1.700 2.300" stroke="#b0dc60" stroke-width="0.800" fill="none"/><ellipse cx="10.300" cy="11.300" rx="5.300" ry="3.200" fill="#fff" stroke="#2a3c98" stroke-width="1.400"/><circle cx="10.300" cy="11.300" r="2.500" fill="#6a88c0"/><circle cx="10.300" cy="11.300" r="1.100" fill="#000"/><circle cx="9.500" cy="10.500" r="0.600" fill="#c8e8ff"/></svg>
<span class="t" style="left:638.00px;top:423px;font-size:11px;line-height:13px;color:#000;letter-spacing:-0.227px;">1,65</span>
<span class="t" style="left:670.00px;top:423px;font-size:11px;line-height:13px;color:#000;letter-spacing:-0.227px;">1,98</span>
<div style="left:12px;top:439px;width:681px;height:20px;background:#a38d6a;"></div>
<span class="t" style="left:14.30px;top:443px;font-size:11px;line-height:13px;color:#fff;letter-spacing:-0.121px;">Tenis / Moskva Q (RUS)  - Tvrdý (Hala)</span>
<span class="t" style="left:250.50px;top:443px;font-size:11px;line-height:13px;color:#fff;letter-spacing:-0.236px;">-zápasů: 6</span>
<div style="left:12px;top:459px;width:21px;height:20px;background:#a38d6a;"></div>
<div style="left:33px;top:459px;width:660px;height:20px;background:#d7cdbb;"></div>
<svg style="left:37px;top:462px" width="13" height="13" viewBox="0 0 13 13"><circle cx="6.500" cy="6.500" r="5.800" fill="none" stroke="#8a8a8a" stroke-width="1"/><path d="M3.500 6.500h6M7 4l2.500 2.500l-2.500 2.500" stroke="#8a8a8a" stroke-width="1" fill="none"/></svg>
<span class="t" style="left:59.00px;top:463px;font-size:11px;line-height:13px;color:#000;letter-spacing:0.023px;">17.10.15</span>
<span class="t" style="left:113.50px;top:463px;font-size:11px;line-height:13px;color:#000;letter-spacing:-0.105px;">14:20</span>
<span class="t" style="left:205.00px;top:463px;font-size:11px;line-height:13px;color:#000;letter-spacing:-0.123px;">Luncanu, Petru /LH/</span>
<span class="t" style="left:305.00px;top:462px;font-size:11px;line-height:13px;color:#000;">-</span>
<span class="t" style="left:312.60px;top:463px;font-size:11px;line-height:13px;color:#0808fa;letter-spacing:-0.117px;">Karlovskiy, Evgeny</span>
<svg style="left:505px;top:460px" width="17" height="16" viewBox="0 0 17 16"><circle cx="6.500" cy="6.200" r="6.200" fill="url(#gl)"/><path d="M2.300 1.700q1.800 -1.500 3.500 -1.500q-0.500 1.200 -1.800 1.600q-0.700 1 -1.200 2.600q-0.600 -0.200 -1.500 0.400q0.200 -1.800 1 -3.100zM0.400 6.500q0.600 -0.500 1.300 0.300q0.200 2 1.400 3.400q0.600 1.200 1.800 2q-2.800 -0.500 -4 -3q-0.500 -1.300 -0.500 -2.700zM9 0.600q2.500 1 3.400 3.200q0.300 1.500 0 3q-0.800 -0.600 -1 -1.800q-1.200 0 -2.400 1q0.200 -1.500 1.300 -2.400q-0.300 -1.600 -1.300 -3z" fill="#58a828"/><path d="M3 2.200q0.800 -0.800 1.800 -1M10 2q1.200 1 1.700 2.300" stroke="#b0dc60" stroke-width="0.800" fill="none"/><ellipse cx="10.300" cy="11.300" rx="5.300" ry="3.200" fill="#fff" stroke="#2a3c98" stroke-width="1.400"/><circle cx="10.300" cy="11.300" r="2.500" fill="#6a88c0"/><circle cx="10.300" cy="11.300" r="1.100" fill="#000"/><circle cx="9.500" cy="10.500" r="0.600" fill="#c8e8ff"/></svg>
<span class="t" style="left:638.00px;top:463px;font-size:11px;line-height:13px;color:#000;letter-spacing:-0.227px;">1,49</span>
<span class="t" style="left:670.00px;top:463px;font-size:11px;line-height:13px;color:#000;letter-spacing:-0.227px;">2,27</span>
<div style="left:12px;top:479px;width:21px;height:20px;background:#a38d6a;"></div>
<div style="left:33px;top:479px;width:660px;height:20px;background:#ece7df;"></div>
<svg style="left:37px;top:482px" width="13" height="13" viewBox="0 0 13 13"><circle cx="6.500" cy="6.500" r="5.800" fill="none" stroke="#8a8a8a" stroke-width="1"/><path d="M3.500 6.500h6M7 4l2.500 2.500l-2.500 2.500" stroke="#8a8a8a" stroke-width="1" fill="none"/></svg>
<span class="t" style="left:59.00px;top:483px;font-size:11px;line-height:13px;color:#000;letter-spacing:0.023px;">17.10.15</span>
<span class="t" style="left:113.50px;top:483px;font-size:11px;line-height:13px;color:#000;letter-spacing:-0.105px;">15:40</span>
<span class="t" style="left:227.00px;top:483px;font-size:11px;line-height:13px;color:#0808fa;letter-spacing:0.063px;">Vatutin, Alexey</span>
<span class="t" style="left:305.00px;top:482px;font-size:11px;line-height:13px;color:#000;">-</span>
<span class="t" style="left:312.60px;top:483px;font-size:11px;line-height:13px;color:#0808fa;letter-spacing:-0.076px;">Lobkov, Alexander</span>
<svg style="left:505px;top:480px" width="17" height="16" viewBox="0 0 17 16"><circle cx="6.500" cy="6.200" r="6.200" fill="url(#gl)"/><path d="M2.300 1.700q1.800 -1.500 3.500 -1.500q-0.500 1.200 -1.800 1.600q-0.700 1 -1.200 2.600q-0.600 -0.200 -1.500 0.400q0.200 -1.800 1 -3.100zM0.400 6.500q0.600 -0.500 1.300 0.300q0.200 2 1.400 3.400q0.600 1.200 1.800 2q-2.800 -0.500 -4 -3q-0.500 -1.300 -0.500 -2.700zM9 0.600q2.500 1 3.400 3.200q0.300 1.500 0 3q-0.800 -0.600 -1 -1.800q-1.200 0 -2.400 1q0.200 -1.500 1.300 -2.400q-0.300 -1.600 -1.300 -3z" fill="#58a828"/><path d="M3 2.200q0.800 -0.800 1.800 -1M10 2q1.200 1 1.700 2.300" stroke="#b0dc60" stroke-width="0.800" fill="none"/><ellipse cx="10.300" cy="11.300" rx="5.300" ry="3.200" fill="#fff" stroke="#2a3c98" stroke-width="1.400"/><circle cx="10.300" cy="11.300" r="2.500" fill="#6a88c0"/><circle cx="10.300" cy="11.300" r="1.100" fill="#000"/><circle cx="9.500" cy="10.500" r="0.600" fill="#c8e8ff"/></svg>
<span class="t" style="left:638.00px;top:483px;font-size:11px;line-height:13px;color:#000;letter-spacing:-0.227px;">1,22</span>
<span class="t" style="left:670.00px;top:483px;font-size:11px;line-height:13px;color:#000;letter-spacing:-0.227px;">3,45</span>
<div style="left:12px;top:499px;width:21px;height:20px;background:#a38d6a;"></div>
<div style="left:33px;top:499px;width:660px;height:20px;background:#d7cdbb;"></div>
<svg style="left:37px;top:502px" width="13" height="13" viewBox="0 0 13 13"><circle cx="6.500" cy="6.500" r="5.800" fill="none" stroke="#8a8a8a" stroke-width="1"/><path d="M3.500 6.500h6M7 4l2.500 2.500l-2.500 2.500" stroke="#8a8a8a" stroke-width="1" fill="none"/></svg>
<span class="t" style="left:59.00px;top:503px;font-size:11px;line-height:13px;color:#000;letter-spacing:0.023px;">17.10.15</span>
<span class="t" style="left:113.50px;top:503px;font-size:11px;line-height:13px;color:#000;letter-spacing:-0.105px;">15:40</span>
<span class="t" style="left:214.50px;top:503px;font-size:11px;line-height:13px;color:#000;letter-spacing:-0.192px;">Riba-Madrid, Pere</span>
<span class="t" style="left:305.00px;top:502px;font-size:11px;line-height:13px;color:#000;">-</span>
<span class="t" style="left:312.60px;top:503px;font-size:11px;line-height:13px;color:#0808fa;letter-spacing:-0.309px;">Ledovskikh, Mikhail</span>
<svg style="left:505px;top:500px" width="17" height="16" viewBox="0 0 17 16"><circle cx="6.500" cy="6.200" r="6.200" fill="url(#gl)"/><path d="M2.300 1.700q1.800 -1.500 3.500 -1.500q-0.500 1.200 -1.800 1.600q-0.700 1 -1.200 2.600q-0.600 -0.200 -1.500 0.400q0.200 -1.800 1 -3.100zM0.400 6.500q0.600 -0.500 1.300 0.300q0.200 2 1.400 3.400q0.600 1.200 1.800 2q-2.800 -0.500 -4 -3q-0.500 -1.300 -0.500 -2.700zM9 0.600q2.500 1 3.400 3.200q0.300 1.500 0 3q-0.800 -0.600 -1 -1.800q-1.200 0 -2.400 1q0.200 -1.500 1.300 -2.400q-0.300 -1.600 -1.300 -3z" fill="#58a828"/><path d="M3 2.200q0.800 -0.800 1.800 -1M10 2q1.200 1 1.700 2.300" stroke="#b0dc60" stroke-width="0.800" fill="none"/><ellipse cx="10.300" cy="11.300" rx="5.300" ry="3.200" fill="#fff" stroke="#2a3c98" stroke-width="1.400"/><circle cx="10.300" cy="11.300" r="2.500" fill="#6a88c0"/><circle cx="10.300" cy="11.300" r="1.100" fill="#000"/><circle cx="9.500" cy="10.500" r="0.600" fill="#c8e8ff"/></svg>
<span class="t" style="left:638.00px;top:503px;font-size:11px;line-height:13px;color:#000;letter-spacing:-0.227px;">1,60</span>
<span class="t" style="left:670.00px;top:503px;font-size:11px;line-height:13px;color:#000;letter-spacing:-0.227px;">2,06</span>
<div style="left:12px;top:519px;width:21px;height:20px;background:#a38d6a;"></div>
<div style="left:33px;top:519px;width:660px;height:20px;background:#ece7df;"></div>
<svg style="left:37px;top:522px" width="13" height="13" viewBox="0 0 13 13"><circle cx="6.500" cy="6.500" r="5.800" fill="none" stroke="#8a8a8a" stroke-width="1"/><path d="M3.500 6.500h6M7 4l2.500 2.500l-2.500 2.500" stroke="#8a8a8a" stroke-width="1" fill="none"/></svg>
<span class="t" style="left:59.00px;top:523px;font-size:11px;line-height:13px;color:#000;letter-spacing:0.023px;">17.10.15</span>
<span class="t" style="left:113.50px;top:523px;font-size:11px;line-height:13px;color:#000;letter-spacing:-0.105px;">17:00</span>
<span class="t" style="left:224.50px;top:523px;font-size:11px;line-height:13px;color:#0808fa;letter-spacing:-0.015px;">Karatsev, Aslan</span>
<span class="t" style="left:305.00px;top:522px;font-size:11px;line-height:13px;color:#000;">-</span>
<span class="t" style="left:312.60px;top:523px;font-size:11px;line-height:13px;color:#0808fa;letter-spacing:-0.259px;">Polyakov, Vladimir</span>
<svg style="left:505px;top:520px" width="17" height="16" viewBox="0 0 17 16"><circle cx="6.500" cy="6.200" r="6.200" fill="url(#gl)"/><path d="M2.300 1.700q1.800 -1.500 3.500 -1.500q-0.500 1.200 -1.800 1.600q-0.700 1 -1.200 2.600q-0.600 -0.200 -1.500 0.400q0.200 -1.800 1 -3.100zM0.400 6.500q0.600 -0.500 1.300 0.300q0.200 2 1.400 3.400q0.600 1.200 1.800 2q-2.800 -0.500 -4 -3q-0.500 -1.300 -0.500 -2.700zM9 0.600q2.500 1 3.400 3.200q0.300 1.500 0 3q-0.800 -0.600 -1 -1.800q-1.200 0 -2.400 1q0.200 -1.500 1.300 -2.400q-0.300 -1.600 -1.300 -3z" fill="#58a828"/><path d="M3 2.200q0.800 -0.800 1.800 -1M10 2q1.200 1 1.700 2.300" stroke="#b0dc60" stroke-width="0.800" fill="none"/><ellipse cx="10.300" cy="11.300" rx="5.300" ry="3.200" fill="#fff" stroke="#2a3c98" stroke-width="1.400"/><circle cx="10.300" cy="11.300" r="2.500" fill="#6a88c0"/><circle cx="10.300" cy="11.300" r="1.100" fill="#000"/><circle cx="9.500" cy="10.500" r="0.600" fill="#c8e8ff"/></svg>
<span class="t" style="left:638.00px;top:523px;font-size:11px;line-height:13px;color:#000;letter-spacing:-0.023px;">1,11</span>
<span class="t" style="left:670.00px;top:523px;font-size:11px;line-height:13px;color:#000;letter-spacing:-0.227px;">4,75</span>
<div style="left:12px;top:539px;width:21px;height:20px;background:#a38d6a;"></div>
<div style="left:33px;top:539px;width:660px;height:20px;background:#d7cdbb;"></div>
<svg style="left:37px;top:542px" width="13" height="13" viewBox="0 0 13 13"><circle cx="6.500" cy="6.500" r="5.800" fill="none" stroke="#8a8a8a" stroke-width="1"/><path d="M3.500 6.500h6M7 4l2.500 2.500l-2.500 2.500" stroke="#8a8a8a" stroke-width="1" fill="none"/></svg>
<span class="t" style="left:59.00px;top:543px;font-size:11px;line-height:13px;color:#000;letter-spacing:0.023px;">17.10.15</span>
<span class="t" style="left:113.50px;top:543px;font-size:11px;line-height:13px;color:#000;letter-spacing:-0.105px;">18:20</span>
<span class="t" style="left:240.50px;top:543px;font-size:11px;line-height:13px;color:#0808fa;letter-spacing:-0.343px;">Elgin, Mikhail</span>
<span class="t" style="left:305.00px;top:542px;font-size:11px;line-height:13px;color:#000;">-</span>
<span class="t" style="left:312.60px;top:543px;font-size:11px;line-height:13px;color:#000;letter-spacing:-0.186px;">Betau, Siarhei</span>
<svg style="left:505px;top:540px" width="17" height="16" viewBox="0 0 17 16"><circle cx="6.500" cy="6.200" r="6.200" fill="url(#gl)"/><path d="M2.300 1.700q1.800 -1.500 3.500 -1.500q-0.500 1.200 -1.800 1.600q-0.700 1 -1.200 2.600q-0.600 -0.200 -1.500 0.400q0.200 -1.800 1 -3.100zM0.400 6.500q0.600 -0.500 1.300 0.300q0.200 2 1.400 3.400q0.600 1.200 1.800 2q-2.800 -0.500 -4 -3q-0.500 -1.300 -0.500 -2.700zM9 0.600q2.500 1 3.400 3.200q0.300 1.500 0 3q-0.800 -0.600 -1 -1.800q-1.200 0 -2.400 1q0.200 -1.500 1.300 -2.400q-0.300 -1.600 -1.300 -3z" fill="#58a828"/><path d="M3 2.200q0.800 -0.800 1.800 -1M10 2q1.200 1 1.700 2.300" stroke="#b0dc60" stroke-width="0.800" fill="none"/><ellipse cx="10.300" cy="11.300" rx="5.300" ry="3.200" fill="#fff" stroke="#2a3c98" stroke-width="1.400"/><circle cx="10.300" cy="11.300" r="2.500" fill="#6a88c0"/><circle cx="10.300" cy="11.300" r="1.100" fill="#000"/><circle cx="9.500" cy="10.500" r="0.600" fill="#c8e8ff"/></svg>
<span class="t" style="left:638.00px;top:543px;font-size:11px;line-height:13px;color:#000;letter-spacing:-0.227px;">1,55</span>
<span class="t" style="left:670.00px;top:543px;font-size:11px;line-height:13px;color:#000;letter-spacing:-0.227px;">2,15</span>
<div style="left:779px;top:160px;width:1px;height:400px;background:#b8b8b8;"></div>
<svg style="left:785px;top:166px" width="7" height="4" viewBox="0 0 7 4"><path d="M0 3.500h7l-3.500 -3.500z" fill="#a0a0a0"/></svg>
<div style="left:784px;top:176px;width:8px;height:99px;background:#b9b9b9;"></div>
<svg style="left:785px;top:549px" width="6" height="3" viewBox="0 0 6 3"><path d="M0 0h6l-3 3z" fill="#808080"/></svg>
<div style="left:349px;top:559px;width:431px;height:1px;background:#c0c0c4;"></div>
<svg style="left:16px;top:565px" width="10" height="7" viewBox="0 0 10 7"><path d="M0 0h1.300v7h-1.300zM5.200 0v7l-3.900 -3.500zM9.200 0v7l-3.900 -3.500z" fill="#787878"/></svg>
<svg style="left:33px;top:565px" width="10" height="7" viewBox="0 0 10 7"><path d="M4 0v7l-4 -3.500zM8.200 0v7l-4 -3.500z" fill="#787878"/></svg>
<svg style="left:52px;top:565px" width="10" height="7" viewBox="0 0 10 7"><path d="M4.300 0v7l-4.300 -3.500z" fill="#787878"/></svg>
<span class="t" style="left:69.50px;top:563px;font-size:11px;line-height:13px;color:#484848;letter-spacing:-0.170px;">1 / 50</span>
<svg style="left:110px;top:565px" width="10" height="7" viewBox="0 0 10 7"><path d="M0 0v7l4.300 -3.500z" fill="#787878"/></svg>
<svg style="left:124.7px;top:565px" width="10" height="7" viewBox="0 0 10 7"><path d="M0 0v7l4 -3.500zM4.200 0v7l4 -3.500z" fill="#787878"/></svg>
<svg style="left:141px;top:565px" width="10" height="7" viewBox="0 0 10 7"><path d="M0 0v7l3.900 -3.500zM3.900 0v7l3.900 -3.500zM7.900 0h1.300v7h-1.300z" fill="#787878"/></svg>
<div style="left:158px;top:567px;width:9px;height:2px;background:#787878;"></div>
<svg style="left:175px;top:565px" width="10" height="7" viewBox="0 0 10 7"><path d="M1 6.200q0.200 -4.600 5.500 -4.600q1.200 0 2 0.800" stroke="#787878" stroke-width="1.900" fill="none"/><path d="M9.300 0.800v5.400h-5.200z" fill="#787878"/></svg>
<svg style="left:193px;top:565px" width="7" height="7" viewBox="0 0 7 7"><path d="M3.500 0v7M0 3.500h7M1 1l5 5M6 1l-5 5" stroke="#505050" stroke-width="1" fill="none"/></svg>
<svg style="left:210px;top:565px" width="7" height="7" viewBox="0 0 7 7"><path d="M3.500 0v7M0 3.500h7M1 1l5 5M6 1l-5 5" stroke="#b4b4b4" stroke-width="1" fill="none"/></svg>
<svg style="left:207px;top:563px" width="3" height="3" viewBox="0 0 3 3"><path d="M0.500 0v3M0.500 1h2" stroke="#b4b4b4" stroke-width="1" fill="none"/></svg>
<svg style="left:227px;top:565px" width="10" height="7" viewBox="0 0 10 7"><path d="M0 0h7v2.200l-2.200 1.300v3.500h-2.600v-3.500l-2.200 -1.300z" fill="#606060"/></svg>
<svg style="left:241px;top:562px" width="15" height="15" viewBox="0 0 15 15"><circle cx="7.500" cy="7.200" r="6.400" fill="#fff" stroke="#d03020" stroke-width="1.700"/><circle cx="7.500" cy="7.200" r="4.400" fill="#fff" stroke="#d84030" stroke-width="1.100"/><path d="M4.800 5.500h3.700" stroke="#d02010" stroke-width="1.200" fill="none"/><path d="M8.500 5v4.500" stroke="#202880" stroke-width="1.200" fill="none"/></svg>
<svg style="left:262px;top:562px" width="16" height="15" viewBox="0 0 16 15"><rect x="0.500" y="0.500" width="11.500" height="12.500" fill="#f0f4ff" stroke="#5870c8"/><circle cx="9" cy="9.500" r="5" fill="#68b828" stroke="#90d050" stroke-width="0.800"/><path d="M9 6.500v6M6 9.500h6" stroke="#fff" stroke-width="1.800"/></svg>
<svg style="left:281px;top:562px" width="16" height="15" viewBox="0 0 16 15"><circle cx="7.500" cy="7" r="5" fill="none" stroke="#509010" stroke-width="4"/><circle cx="7.500" cy="7" r="5" fill="none" stroke="#88cc28" stroke-width="2.600"/><path d="M4.500 14h5v-3z" fill="#fff"/><path d="M9.500 8h6.500l-3.300 5z" fill="#78c020" stroke="#509010" stroke-width="0.700"/></svg>
<svg style="left:356px;top:566px" width="3" height="6" viewBox="0 0 3 6"><path d="M3 0v6l-3 -3z" fill="#c4c4c4"/></svg>
<svg style="left:769px;top:566px" width="3" height="6" viewBox="0 0 3 6"><path d="M0 0v6l3 -3z" fill="#d0d0d0"/></svg>
<div style="left:10px;top:585px;width:77px;height:21px;background:#fff;box-shadow:inset 1px 1px 0 #a0a0a0, inset -1px -1px 0 #fff, inset 2px 2px 0 #696969, inset -2px -2px 0 #e3e3e3;"></div>
<div style="left:69px;top:587px;width:16px;height:17px;background:#f0f0f0;box-shadow:inset 1px 1px 0 #fff, inset -1px -1px 0 #696969, inset -2px -2px 0 #a0a0a0;"></div>
<svg style="left:73px;top:593px" width="8" height="4" viewBox="0 0 8 4"><path d="M0 0h7l-3.5 4z" fill="#000"/></svg>
<span class="t" style="left:14.00px;top:589px;font-size:12px;line-height:14px;color:#000;letter-spacing:-0.891px;">vše</span>
<svg style="left:94px;top:587px" width="17" height="16" viewBox="0 0 17 16"><path d="M0.300 10.800l2.700 -2.700l3.300 3.300l8.700 -10.400l1.700 1.200l-9.700 13.800h-1.200z" fill="#101078"/><path d="M0.300 9.300l2.700 -2.700l3.300 3.300l8.700 -10.400l1.700 1.200l-9.700 13.800h-1.200z" fill="#08b008"/></svg>
<div style="left:118px;top:584px;width:231px;height:23px;background:#f0f0f0;box-shadow:inset 1px 1px 0 #fff, inset -1px -1px 0 #696969, inset -2px -2px 0 #a0a0a0;"></div>
<span class="t" style="left:193.00px;top:589px;font-size:12px;line-height:14px;color:#000;letter-spacing:-0.527px;">Všechny zápasy</span>
<svg style="left:355px;top:592px" width="16" height="9" viewBox="0 0 16 9"><path d="M0.300 4.500l9.500 -4.300l-2.300 3h8.200v2.600h-8.200l2.300 3z" fill="#f00808" stroke="#700000" stroke-width="0.600"/></svg>
<svg style="left:386px;top:588px" width="17" height="16" viewBox="0 0 17 16"><circle cx="8" cy="5" r="5" fill="#fff8a0" stroke="#f0e020" stroke-width="1.400" stroke-dasharray="1 1"/><path d="M1 14.500l2.500 -7q2.500 -1 4.500 1q2 -2 4.500 -1l2.500 7z" fill="#fff" stroke="#000" stroke-width="1"/><path d="M8 8.500v5.500" stroke="#000" stroke-width="0.800"/><path d="M0.500 15h6.500l1 1l1 -1h6.500" stroke="#1030e0" stroke-width="1.400" fill="none"/><text x="8" y="8.500" text-anchor="middle" font-size="10.500" font-weight="bold" font-family="Liberation Sans, sans-serif" fill="#f01010">?</text></svg>
<div style="left:418px;top:590px;width:13px;height:13px;background:#fff;box-shadow:inset 1px 1px 0 #a0a0a0, inset 2px 2px 0 #696969, inset -1px -1px 0 #fff, inset -2px -2px 0 #e3e3e3;"></div>
<span class="t" style="left:436.00px;top:589px;font-size:12px;line-height:14px;color:#000;letter-spacing:-0.546px;">Soutěže:</span>
<div style="left:495px;top:584px;width:170px;height:23px;background:#f0f0f0;box-shadow:inset 1px 1px 0 #fff, inset -1px -1px 0 #696969, inset -2px -2px 0 #a0a0a0;"></div>
<span class="t" style="left:512.00px;top:589px;font-size:12px;line-height:14px;color:#000;letter-spacing:-0.193px;">Soutěž z Úvodního okna</span>
<svg style="left:641px;top:594px" width="7" height="4" viewBox="0 0 7 4"><path d="M0 0h7l-3.5 4z" fill="#000"/></svg>
<svg style="left:676px;top:592px" width="16" height="9" viewBox="0 0 16 9"><path d="M0.300 4.500l9.500 -4.300l-2.300 3h8.200v2.600h-8.200l2.300 3z" fill="#f00808" stroke="#700000" stroke-width="0.600"/></svg>
<div style="left:702px;top:585px;width:60px;height:22px;background:#f0f0f0;box-shadow:inset 1px 1px 0 #fff, inset -1px -1px 0 #696969, inset -2px -2px 0 #a0a0a0;"></div>
<span class="t" style="left:712.25px;top:589px;font-size:12px;line-height:14px;color:#000;letter-spacing:-0.599px;">Analýza</span>
<div style="left:8px;top:609px;width:123px;height:22px;background:#fff;box-shadow:inset 1px 1px 0 #a0a0a0, inset -1px -1px 0 #fff, inset 2px 2px 0 #696969, inset -2px -2px 0 #e3e3e3;"></div>
<div style="left:113px;top:611px;width:16px;height:18px;background:#f0f0f0;box-shadow:inset 1px 1px 0 #fff, inset -1px -1px 0 #696969, inset -2px -2px 0 #a0a0a0;"></div>
<svg style="left:117px;top:618px" width="8" height="4" viewBox="0 0 8 4"><path d="M0 0h7l-3.5 4z" fill="#000"/></svg>
<span class="t" style="left:12.60px;top:614px;font-size:12px;line-height:14px;color:#000;letter-spacing:-0.194px;">Fortuna</span>
<div style="left:135px;top:611px;width:117px;height:19px;box-shadow:inset 1px 1px 0 #a0a0a0, inset -1px -1px 0 #fff;"></div>
<div style="left:255px;top:611px;width:210px;height:19px;box-shadow:inset 1px 1px 0 #a0a0a0, inset -1px -1px 0 #fff;"></div>
<div style="left:469px;top:611px;width:72px;height:19px;box-shadow:inset 1px 1px 0 #a0a0a0, inset -1px -1px 0 #fff;"></div>
<div style="left:544px;top:611px;width:78px;height:19px;box-shadow:inset 1px 1px 0 #a0a0a0, inset -1px -1px 0 #fff;"></div>
<div style="left:623px;top:611px;width:35px;height:19px;box-shadow:inset 1px 1px 0 #a0a0a0, inset -1px -1px 0 #fff;"></div>
<div style="left:661px;top:611px;width:24px;height:19px;box-shadow:inset 1px 1px 0 #a0a0a0, inset -1px -1px 0 #fff;"></div>
<div style="left:688px;top:611px;width:34px;height:19px;box-shadow:inset 1px 1px 0 #a0a0a0, inset -1px -1px 0 #fff;"></div>
<span class="t" style="left:283.00px;top:614px;font-size:12px;line-height:14px;color:#000;letter-spacing:-0.536px;">17.2.2015 0:2 (3-6, 3-6) ... [1,65]</span>
<span class="t" style="left:489.00px;top:614px;font-size:12px;line-height:14px;color:#000;letter-spacing:-0.260px;">Tikety</span>
<span class="t" style="left:559.30px;top:614px;font-size:12px;line-height:14px;color:#000;letter-spacing:-0.314px;">Nabídka</span>
<svg style="left:605px;top:620px" width="7" height="4" viewBox="0 0 7 4"><path d="M0 0h7l-3.5 4z" fill="#000"/></svg>
<span class="t" style="left:634.00px;top:614px;font-size:12px;line-height:14px;color:#000;letter-spacing:-0.674px;">14</span>
<svg style="left:664px;top:614px" width="15" height="15" viewBox="0 0 15 15"><circle cx="7.500" cy="7.500" r="6.500" fill="#ffff00" stroke="#202020" stroke-width="1"/></svg>
<span class="t" style="left:693.00px;top:614px;font-size:12px;line-height:14px;color:#000;letter-spacing:-0.606px;">12:46</span>
<span class="t" style="left:729.00px;top:614px;font-size:12px;line-height:14px;color:#000;letter-spacing:0.052px;">Online</span>
<svg style="left:766px;top:620px" width="7" height="4" viewBox="0 0 7 4"><path d="M0 0h7l-3.5 4z" fill="#000"/></svg>
<svg style="left:788px;top:618px" width="12" height="12" viewBox="0 0 12 12"><path d="M11 1l-10 10M11 5l-6 6M11 9l-2 2" stroke="#b0b0b0" stroke-width="1.200"/></svg>
</body></html>
